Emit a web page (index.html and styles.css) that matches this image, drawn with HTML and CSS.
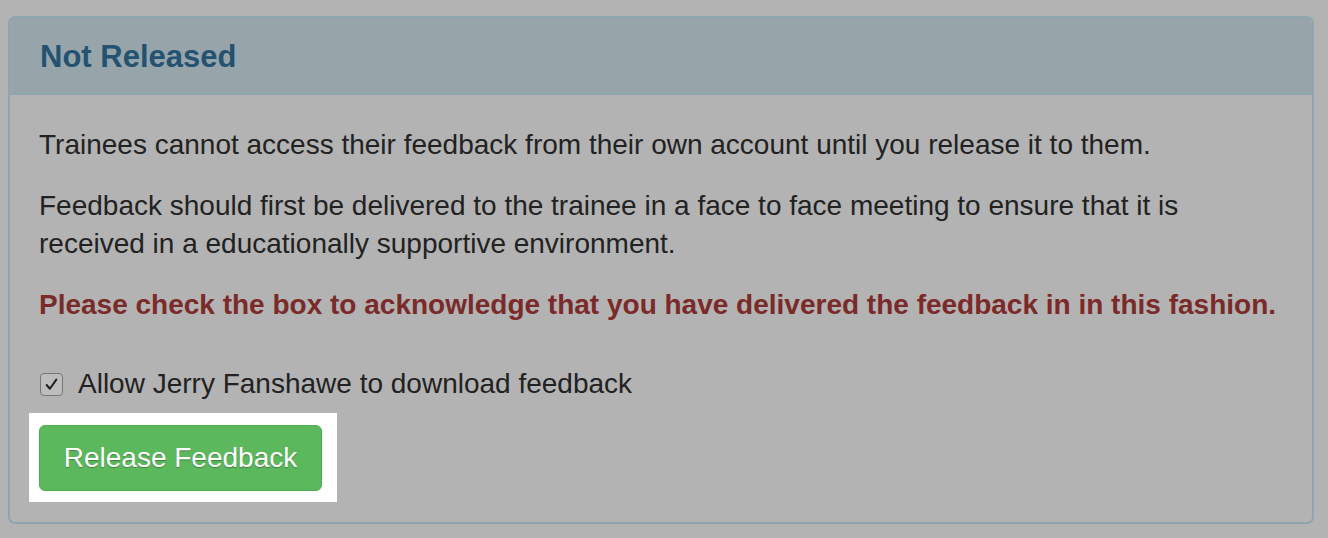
FILE: index.html
```html
<!DOCTYPE html>
<html>
<head>
<meta charset="utf-8">
<link rel="stylesheet" href="styles.css">
</head>
<body>
<div class="panel">
  <div class="panel-heading"><h3 class="panel-title">Not Released</h3></div>
  <div class="panel-body">
    <p>Trainees cannot access their feedback from their own account until you release it to them.</p>
    <p>Feedback should first be delivered to the trainee in a face to face meeting to ensure that it is received in a educationally supportive environment.</p>
    <p class="warn">Please check the box to acknowledge that you have delivered the feedback in in this fashion.</p>
    <label class="check"><span class="box"><svg width="15" height="15" viewBox="0 0 14 14"><path d="M2.5 7.5 L5.5 11 L11.5 2.5" fill="none" stroke="#222" stroke-width="1.9" stroke-linecap="round" stroke-linejoin="round"/></svg></span>Allow Jerry Fanshawe to download feedback</label>
    <div class="highlight"><button class="btn">Release Feedback</button></div>
  </div>
</div>
</body>
</html>
```
FILE: styles.css
```css
html, body { margin: 0; padding: 0; }
body {
  background: #b3b3b3;
  font-family: "Liberation Sans", Arial, sans-serif;
  color: #222;
  width: 1328px;
  height: 538px;
  overflow: hidden;
}
.panel {
  margin: 16px 0 0 8px;
  width: 1302px;
  height: 504px;
  border: 2px solid #8fa5ad;
  border-radius: 7px;
  box-sizing: content-box;
}
.panel-heading {
  background: #97a5ab;
  border-bottom: 2px solid #8fa5ad;
  border-radius: 5px 5px 0 0;
  padding: 2px 30px 0 30px;
  box-sizing: border-box;
  height: 77px;
  display: flex;
  align-items: center;
}
.panel-title {
  margin: 0;
  font-size: 31px;
  font-weight: bold;
  color: #245271;
}
.panel-body { padding: 31px 30px 0 29px; }
.panel-body p {
  margin: 0 0 23px 0;
  font-size: 28px;
  line-height: 38px;
}
.panel-body p.warn {
  color: #7b2a2a;
  font-weight: bold;
  margin-bottom: 41px;
}
.check {
  display: flex;
  align-items: center;
  font-size: 28px;
  line-height: 38px;
}
.box {
  width: 21px; height: 21px;
  border: 1px solid #777;
  border-radius: 4px;
  background: #bdbdbd;
  display: flex; align-items: center; justify-content: center;
  margin: 0 15px 0 1px;
}
.highlight {
  background: #fff;
  width: 308px;
  height: 89px;
  margin: 10px 0 0 -10px;
  display: flex;
  align-items: flex-start;
  padding: 12px 0 0 10px;
  box-sizing: border-box;
}
.btn {
  width: 283px;
  height: 66px;
  background: #5cb85c;
  border: 1px solid #4cae4c;
  border-radius: 6px;
  color: #fff;
  font-family: "Liberation Sans", Arial, sans-serif;
  font-size: 28px;
  text-shadow: 0 1px 1px rgba(0,0,0,0.3);
  padding: 0;
}
```
